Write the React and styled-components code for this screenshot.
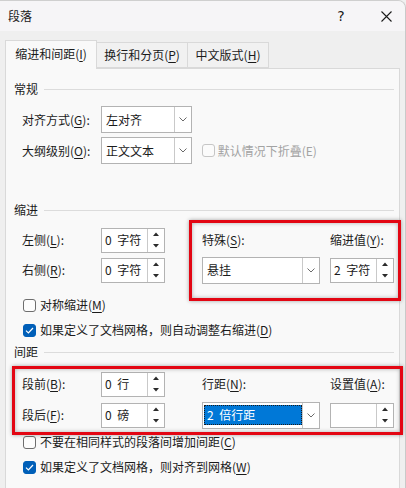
import React from "react";
import styled, { createGlobalStyle } from "styled-components";

const GlobalStyle = createGlobalStyle`
  html, body { margin: 0; padding: 0; background: #f0f0f0; }
  body { font-family: "Noto Sans CJK SC", "Microsoft YaHei", sans-serif; font-size: 12px; color: #1b1b1b; }
  u { text-underline-offset: 2px; text-decoration-thickness: 1px; }
`;

const Window = styled.div`
  position: relative;
  width: 406px;
  height: 488px;
  overflow: hidden;
  background: #efefef;
  box-sizing: border-box;
  border-top: 1px solid #cfcfcf;
  border-right: 1px solid #c9c9c9;
  border-top-right-radius: 8px;
`;

const TitleBar = styled.div`
  height: 30px;
  display: flex;
  align-items: center;
  padding-left: 8px;
  background: #f6f5f7;
  line-height: 16px;
`;

const Title = styled.div`
  flex: 1;
  font-size: 12px;
`;

const TitleButton = styled.div`
  width: ${(p) => p.$w}px;
  height: 30px;
  box-sizing: border-box;
  padding-left: ${(p) => p.$pl || 0}px;
  display: flex;
  justify-content: center;
  align-items: center;
  font-family: "Segoe UI", "DejaVu Sans", sans-serif;
  font-size: 14px;
  color: #1b1b1b;
`;

const TabRow = styled.div`
  display: flex;
  align-items: flex-end;
  height: 28px;
  margin-top: 9px;
  padding-left: 5px;
`;

const Tab = styled.div`
  position: relative;
  z-index: ${(p) => (p.$active ? 2 : 1)};
  box-sizing: border-box;
  width: ${(p) => p.$w}px;
  height: ${(p) => (p.$active ? 29 : 26)}px;
  margin-bottom: ${(p) => (p.$active ? -1 : 0)}px;
  margin-left: ${(p) => (p.$first ? 0 : -1)}px;
  display: flex;
  align-items: center;
  justify-content: center;
  padding-bottom: ${(p) => (p.$active ? 2 : 0)}px;
  background: ${(p) => (p.$active ? "#f9f9f9" : "#f1f1f1")};
  border: 1px solid #d9d9d9;
  border-bottom: ${(p) => (p.$active ? "none" : "1px solid #d9d9d9")};
  line-height: 16px;
`;

const Panel = styled.div`
  margin: 0 5px;
  height: 440px;
  box-sizing: border-box;
  border: 1px solid #d9d9d9;
  background: #f9f9f9;
  display: flex;
  flex-direction: column;
`;

const SectionHeader = styled.div`
  display: flex;
  align-items: center;
  gap: 6px;
  height: 16px;
  line-height: 16px;
  margin-top: ${(p) => p.$mt}px;
  padding-left: 8px;
  padding-right: 5px;
  &::after {
    content: "";
    flex: 1;
    height: 1px;
    background: #dcdcdc;
  }
`;

const GeneralRows = styled.div`
  display: flex;
  flex-direction: column;
  gap: 4px;
  margin-top: 9px;
  padding-left: 16px;
`;

const Row = styled.div`
  display: flex;
  align-items: center;
  height: 27px;
`;

const Label = styled.div`
  width: ${(p) => (p.$w ? `${p.$w}px` : "auto")};
  line-height: 16px;
  white-space: nowrap;
  color: ${(p) => (p.$disabled ? "#a3a3a3" : "#1b1b1b")};
`;

const FieldGrid = styled.div`
  display: grid;
  grid-template-columns: 79px 64px 37px 118px 10px 65px;
  grid-template-rows: 26px 26px;
  row-gap: ${(p) => p.$gap}px;
  align-items: center;
  margin-top: ${(p) => p.$mt}px;
  padding-left: 16px;
`;

const Filler = styled.span``;

const SelectBox = styled.div`
  box-sizing: border-box;
  width: ${(p) => p.$w}px;
  height: 27px;
  display: flex;
  background: #ffffff;
  border: 1px solid #b3b3b3;
`;

const SelectValue = styled.div`
  flex: 1;
  display: flex;
  align-items: center;
  padding-left: ${(p) => (p.$selected ? 1 : 4)}px;
  line-height: 16px;
  white-space: nowrap;
`;

const Highlight = styled.span`
  display: flex;
  align-items: center;
  box-sizing: border-box;
  width: 98px;
  height: 20px;
  padding-left: 3px;
  word-spacing: 3px;
  background: #0078d7;
  color: #ffffff;
  outline: 1px dotted #1b1b1b;
  outline-offset: -1px;
`;

const DropButton = styled.div`
  width: 16px;
  display: flex;
  align-items: center;
  justify-content: center;
  border-left: 1px solid #c9c9c9;
`;

const SpinBox = styled.div`
  box-sizing: border-box;
  width: 64px;
  height: 25px;
  display: flex;
  background: #ffffff;
  border: 1px solid #b3b3b3;
`;

const SpinValue = styled.div`
  flex: 1;
  display: flex;
  align-items: center;
  padding-left: 3px;
  line-height: 16px;
  white-space: pre;
  word-spacing: 3px;
`;

const SpinArrows = styled.div`
  width: 16px;
  display: flex;
  flex-direction: column;
  border-left: 1px solid #c9c9c9;
`;

const SpinArrow = styled.div`
  flex: 1;
  display: flex;
  align-items: center;
  justify-content: center;
`;

const CheckRow = styled.div`
  display: flex;
  align-items: center;
  gap: 4px;
  height: 20px;
  margin-top: ${(p) => p.$mt}px;
  padding-left: 17px;
  line-height: 16px;
  white-space: nowrap;
`;

const Box = styled.div`
  box-sizing: border-box;
  width: 13px;
  height: 13px;
  border-radius: 3px;
  display: flex;
  align-items: center;
  justify-content: center;
  background: ${(p) => (p.$checked ? "#005fb8" : p.$disabled ? "#fbfbfb" : "#fdfdfd")};
  border: 1px solid ${(p) => (p.$checked ? "#005fb8" : p.$disabled ? "#c6c6c6" : "#6e6e6e")};
  margin-left: ${(p) => p.$ml || 0}px;
`;

const Annotation = styled.div`
  position: absolute;
  left: ${(p) => p.$x}px;
  top: ${(p) => p.$y}px;
  width: ${(p) => p.$w}px;
  height: ${(p) => p.$h}px;
  box-sizing: border-box;
  border: 3px solid #e30613;
  box-shadow: 0 0 4px rgba(0, 0, 0, 0.35), inset 0 0 4px rgba(0, 0, 0, 0.3);
  pointer-events: none;
`;

const Chevron = () => (
  <svg width="8" height="5" viewBox="0 0 8 5">
    <path d="M0.5 0.5 L4 4 L7.5 0.5" fill="none" stroke="#6a6a6a" strokeWidth="1" />
  </svg>
);

const TriUp = () => (
  <svg width="6" height="4" viewBox="0 0 6 4">
    <path d="M0 4 L3 0.5 L6 4 Z" fill="#2b2b2b" />
  </svg>
);

const TriDown = () => (
  <svg width="6" height="4" viewBox="0 0 6 4">
    <path d="M0 0 L3 3.5 L6 0 Z" fill="#2b2b2b" />
  </svg>
);

const Check = () => (
  <svg width="9" height="7" viewBox="0 0 9 7">
    <path d="M1 3.6 L3.4 6 L8 1" fill="none" stroke="#ffffff" strokeWidth="1.2" />
  </svg>
);

const Select = ({ w, children, selected }) => (
  <SelectBox $w={w}>
    <SelectValue $selected={selected}>{children}</SelectValue>
    <DropButton>
      <Chevron />
    </DropButton>
  </SelectBox>
);

const Spinner = ({ children }) => (
  <SpinBox>
    <SpinValue>{children}</SpinValue>
    <SpinArrows>
      <SpinArrow>
        <TriUp />
      </SpinArrow>
      <SpinArrow>
        <TriDown />
      </SpinArrow>
    </SpinArrows>
  </SpinBox>
);

const Key = ({ k }) => (
  <>
    (<u>{k}</u>)
  </>
);

export default function App() {
  return (
    <>
      <GlobalStyle />
      <Window>
        <TitleBar>
          <Title>段落</Title>
          <TitleButton $w={46}>?</TitleButton>
          <TitleButton $w={41} $pl={4}>
            <svg width="11" height="11" viewBox="0 0 11 11">
              <path d="M0.5 0.5 L10.5 10.5 M10.5 0.5 L0.5 10.5" stroke="#1b1b1b" strokeWidth="1.1" />
            </svg>
          </TitleButton>
        </TitleBar>

        <TabRow>
          <Tab $active $first $w={92}>
            缩进和间距<Key k="I" />
          </Tab>
          <Tab $w={92}>
            换行和分页<Key k="P" />
          </Tab>
          <Tab $w={82}>
            中文版式<Key k="H" />
          </Tab>
        </TabRow>

        <Panel>
          <SectionHeader $mt={12}>常规</SectionHeader>
          <GeneralRows>
            <Row>
              <Label $w={79}>
                对齐方式<Key k="G" />:
              </Label>
              <Select w={91}>左对齐</Select>
            </Row>
            <Row>
              <Label $w={79}>
                大纲级别<Key k="O" />:
              </Label>
              <Select w={91}>正文文本</Select>
              <Box $disabled $ml={10} />
              <Label $disabled>&nbsp;默认情况下折叠(E)</Label>
            </Row>
          </GeneralRows>

          <SectionHeader $mt={38}>缩进</SectionHeader>
          <FieldGrid $mt={9} $gap={4}>
            <Label>
              左侧<Key k="L" />:
            </Label>
            <Spinner>0 字符</Spinner>
            <Filler />
            <Label>
              特殊<Key k="S" />:
            </Label>
            <Filler />
            <Label>
              缩进值<Key k="Y" />:
            </Label>

            <Label>
              右侧<Key k="R" />:
            </Label>
            <Spinner>0 字符</Spinner>
            <Filler />
            <Select w={118}>悬挂</Select>
            <Filler />
            <Spinner>2 字符</Spinner>
          </FieldGrid>

          <CheckRow $mt={12}>
            <Box />
            <span>
              对称缩进<Key k="M" />
            </span>
          </CheckRow>
          <CheckRow $mt={5}>
            <Box $checked>
              <Check />
            </Box>
            <span>
              如果定义了文档网格，则自动调整右缩进<Key k="D" />
            </span>
          </CheckRow>

          <SectionHeader $mt={4}>间距</SectionHeader>
          <FieldGrid $mt={11} $gap={5}>
            <Label>
              段前<Key k="B" />:
            </Label>
            <Spinner>0 行</Spinner>
            <Filler />
            <Label>
              行距<Key k="N" />:
            </Label>
            <Filler />
            <Label>
              设置值<Key k="A" />:
            </Label>

            <Label>
              段后<Key k="F" />:
            </Label>
            <Spinner>0 磅</Spinner>
            <Filler />
            <Select w={118} selected>
              <Highlight>2 倍行距</Highlight>
            </Select>
            <Filler />
            <Spinner></Spinner>
          </FieldGrid>

          <CheckRow $mt={4}>
            <Box />
            <span>
              不要在相同样式的段落间增加间距<Key k="C" />
            </span>
          </CheckRow>
          <CheckRow $mt={5}>
            <Box $checked>
              <Check />
            </Box>
            <span>
              如果定义了文档网格，则对齐到网格<Key k="W" />
            </span>
          </CheckRow>
        </Panel>

        <Annotation $x={189} $y={219} $w={212} $h={81} />
        <Annotation $x={12} $y={365} $w={391} $h={69} />
      </Window>
    </>
  );
}
